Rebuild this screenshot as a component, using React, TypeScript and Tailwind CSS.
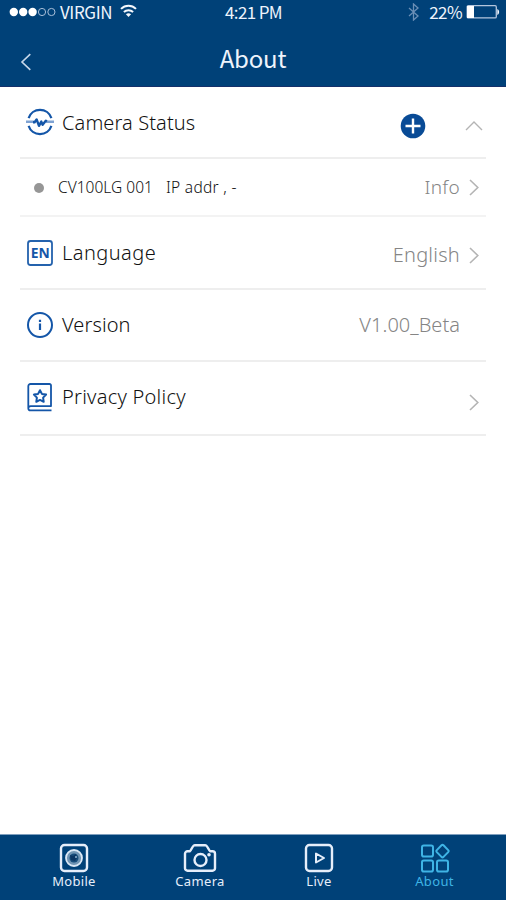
import React, { ReactNode, useState } from 'react';

type IconProps = { className?: string };

const WifiIcon = () => (
  <svg className="-mt-[2px]" width="17" height="14" viewBox="0 0 17 14" fill="none" stroke="#f4f7fc" strokeWidth="2">
    <path d="M1 4.9C5.2.7 11.8.7 16 4.9" />
    <path d="M3.9 8c2.6-2.5 6.6-2.5 9.2 0" />
    <path d="M8.5 13 5.9 10.3c1.5-1.4 3.7-1.4 5.2 0L8.5 13Z" fill="#f4f7fc" stroke="none" />
  </svg>
);

const BluetoothIcon = () => (
  <svg width="11" height="18" viewBox="0 0 11 18" fill="none" stroke="#6b8fb6" strokeWidth="1.3">
    <path d="m1 5 9 8-4.5 4V1L10 5l-9 8" />
  </svg>
);

const BatteryIcon = () => (
  <svg width="34" height="14" viewBox="0 0 34 14">
    <rect x="1.2" y="0.7" width="29.1" height="12.2" rx="1.2" fill="none" stroke="#b4c6dd" strokeWidth="1.3" />
    <rect x="1" y="1" width="7" height="12" fill="#fff" />
    <path d="M31.3 4v6c1-.4 1.8-1.5 1.8-3s-.8-2.6-1.8-3Z" fill="#f4f7fc" />
  </svg>
);

const ChevronRight = ({ className = '' }: IconProps) => (
  <svg className={className} width="11" height="17" viewBox="0 0 11 17" fill="none" stroke="#b4b4b4" strokeWidth="1.6">
    <path d="m1 1 7.8 7.5L1 16" />
  </svg>
);

const StatusIcon = () => (
  <svg width="28" height="28" viewBox="0 0 28 28" fill="none" stroke="#1456a8" strokeWidth="2.2">
    <path d="M2.6 10.2a12 12 0 0 1 22.8 0M2.6 17.8a12 12 0 0 0 22.8 0" />
    <path d="M0 13.8h8M20 13.8H28" stroke="#7fa3d3" strokeWidth="2.6" />
    <path d="M7 14.2h1.6l2-2.8 2.4 6.4 2.3-4.2 1.3 3.2 3.2-4 1 .8" strokeWidth="2.4" strokeLinejoin="round" />
  </svg>
);

const LanguageIcon = () => (
  <svg width="28" height="28" viewBox="0 0 28 28" fill="none">
    <rect x="2" y="2" width="24" height="24" rx="2.5" stroke="#2462ad" strokeWidth="1.8" />
    <text
      x="4.8"
      y="19"
      fontSize="14.5"
      fontWeight="700"
      textLength="19"
      lengthAdjust="spacingAndGlyphs"
      className="font-['Noto_Sans',sans-serif]"
      fill="#1456a8"
    >
      EN
    </text>
  </svg>
);

const VersionIcon = () => (
  <svg width="28" height="28" viewBox="0 0 28 28" fill="none" stroke="#1456a8" strokeWidth="2">
    <circle cx="14" cy="14" r="12" />
    <path d="M14 12.5V19M14 8.8V11" strokeWidth="2.2" />
  </svg>
);

const PrivacyIcon = () => (
  <svg className="-mt-[2px]" width="28" height="30" viewBox="0 0 28 30" fill="none" stroke="#1456a8" strokeWidth="1.8">
    <path d="M25 24.5v-21A1.500 1.500 0 0 0 23.500 2h-19A2.200 2.200 0 0 0 2.300 4.200v22a2.200 2.200 0 0 0 2.200 2.200h21M3 25.200a2 2 0 0 1 1.800-1h20.700" />
    <path d="m14 8.200 1.900 3.700 4.200.7-3 3 .6 4.200-3.700-1.900-3.700 1.900.6-4.200-3-3 4.200-.7Z" strokeWidth="2" strokeLinejoin="round" />
  </svg>
);

const MobileIcon = () => (
  <svg width="30" height="30" viewBox="0 0 30 30" fill="none">
    <rect x="2" y="2" width="26" height="26" rx="3.5" stroke="#e6eefa" strokeWidth="2.4" />
    <circle cx="15" cy="15" r="8" fill="#7195b4" stroke="#dce8f5" strokeWidth="1.8" />
    <circle cx="15" cy="15" r="4.5" fill="#184d7b" />
    <path d="m11 12 3 1 3-2 1 4-2 3-4-1Z" fill="#0b3563" />
    <circle cx="17" cy="14" r="1" fill="#8fb3d1" />
  </svg>
);

const CameraIcon = () => (
  <svg width="34" height="30" viewBox="0 0 34 30" fill="none" stroke="#e6eefa" strokeWidth="2.4" strokeLinejoin="round">
    <path d="M4.500 8.300h2.300c1.400-.5 2-4.200 3.900-5.700a2 2 0 0 1 1.200-.4h10.200a2 2 0 0 1 1.200.4c1.900 1.500 2.500 5.200 3.900 5.700h2.300a2.500 2.500 0 0 1 2.500 2.500v14.400a2.500 2.500 0 0 1-2.500 2.500h-25A2.500 2.500 0 0 1 2 25.200V10.800a2.500 2.500 0 0 1 2.500-2.500Z" />
    <circle cx="17.500" cy="17" r="6" />
    <circle cx="26" cy="11.800" r="1.800" fill="#e6eefa" stroke="none" />
  </svg>
);

const LiveIcon = () => (
  <svg width="30" height="30" viewBox="0 0 30 30" fill="none" stroke="#e6eefa" strokeLinejoin="round">
    <rect x="2" y="2" width="26" height="26" rx="3.5" strokeWidth="2.4" />
    <path d="M12 10.5v9l8-4.5Z" strokeWidth="2" />
  </svg>
);

const AboutIcon = () => (
  <svg width="30" height="30" viewBox="0 0 30 30" fill="none" stroke="#3fb4e5" strokeWidth="2" strokeLinejoin="round">
    <rect x="2" y="2.5" width="11" height="11" rx="1.8" />
    <path d="M21.500 2.300a1.500 1.500 0 0 1 2 0l4.700 4.800a1.500 1.500 0 0 1 0 2l-4.700 4.800a1.500 1.500 0 0 1-2 0l-4.700-4.800a1.500 1.500 0 0 1 0-2Z" />
    <rect x="2" y="17.500" width="11" height="11" rx="1.8" />
    <rect x="17" y="17.500" width="11" height="11" rx="1.8" />
  </svg>
);

interface RowProps {
  icon: ReactNode;
  label: string;
  labelClass: string;
  className: string;
  children?: ReactNode;
}

const Row = ({ icon, label, labelClass, className, children }: RowProps) => (
  <div className={`flex items-center border-b-2 border-[#eeeeee] pl-[6px] ${className}`}>
    {icon}
    <span className={`ml-[8px] whitespace-nowrap text-[20px] leading-[28px] text-[#111111] ${labelClass}`}>{label}</span>
    <div className="ml-auto flex items-center">{children}</div>
  </div>
);

const tabs = [
  { name: 'Mobile', icon: MobileIcon, item: 'w-[148px]', label: 'tracking-[0.3px]' },
  { name: 'Camera', icon: CameraIcon, item: 'w-[104px]', label: 'tracking-[0.35px]' },
  { name: 'Live', icon: LiveIcon, item: 'w-[134px]', label: 'tracking-[0.35px]' },
  { name: 'About', icon: AboutIcon, item: 'w-[97px]', label: 'tracking-[0.35px]' },
];

function App() {
  const [open, setOpen] = useState(true);

  return (
    <div className="flex h-[900px] w-[506px] flex-col overflow-hidden bg-white font-['Noto_Sans',sans-serif]">
      <header className="h-[87px] shrink-0 border-b border-[#15306a] bg-[#004178] font-['Noto_Sans_CJK_SC',sans-serif] text-[#eef4fc]">
        <div className="grid h-[23px] grid-cols-3 items-center pl-[9px] pr-[6px] text-[17px] leading-[23px]">
          <div className="flex items-center">
            <svg width="47" height="10" viewBox="0 0 47 10" fill="#fff">
              <circle cx="4.8" cy="5" r="4.2" />
              <circle cx="14.2" cy="5" r="4.2" />
              <circle cx="23.6" cy="5" r="4.2" />
              <circle cx="33" cy="5" r="3.6" fill="none" stroke="#a9bfd9" />
              <circle cx="42.4" cy="5" r="3.6" fill="none" stroke="#a9bfd9" />
            </svg>
            <span className="-mt-px ml-[4px] mr-[8px] tracking-[-0.4px]">VIRGIN</span>
            <WifiIcon />
          </div>
          <div className="-ml-[2px] -mt-px text-center tracking-[-0.65px]">4:21 PM</div>
          <div className="flex items-center justify-end">
            <BluetoothIcon />
            <span className="-mt-px ml-[10px] mr-[4px] tracking-[-0.6px]">22%</span>
            <BatteryIcon />
          </div>
        </div>
        <div className="grid h-[62px] grid-cols-3 items-center">
          <svg className="ml-[20px] mt-[15px]" width="12" height="18" viewBox="0 0 12 18" fill="none" stroke="#c7d8ea" strokeWidth="1.6">
            <path d="M10.3 1.2 2 9l8.3 7.800" />
          </svg>
          <h1 className="mt-[7px] text-center text-[24px] leading-[36px] tracking-[-0.2px]">About</h1>
        </div>
      </header>

      <main className="flex-1 px-[20px] font-light">
        <Row icon={<StatusIcon />} label="Camera Status" labelClass="mt-[2px] tracking-[0.1px]" className="h-[72px]">
          <svg className="mr-[39px] mt-[7px]" width="26" height="26" viewBox="0 0 26 26">
            <circle cx="13" cy="13" r="12.3" fill="#094b96" />
            <path d="M13 5.500v15M5.500 13h15" stroke="#fff" strokeWidth="2.4" />
          </svg>
          <button className="mr-[3px] mt-[7px]" onClick={() => setOpen(!open)}>
            <svg width="18" height="11" viewBox="0 0 18 11" fill="none" stroke="#b4b4b4" strokeWidth="1.4">
              <path d="m1 10 8-8 8 8" />
            </svg>
          </button>
        </Row>

        {open && (
          <div className="flex h-[58px] items-center border-b-2 border-[#f3f3f3] pl-[14px] pr-[6px]">
            <span className="mt-[2px] h-[10px] w-[10px] rounded-full bg-[#969696]" />
            <span className="ml-[14px] whitespace-pre text-[15.5px] leading-[22px] tracking-[0.02px] text-[#111111]">CV100LG 001</span>
            <span className="ml-[13px] whitespace-pre text-[15.5px] leading-[22px] tracking-[0.3px] text-[#111111]">IP addr , -</span>
            <span className="-mt-px ml-auto mr-[9px] text-[19px] leading-[26px] tracking-[0.3px] text-[#858585]">Info</span>
            <ChevronRight />
          </div>
        )}

        <Row icon={<LanguageIcon />} label="Language" labelClass="tracking-[0.45px]" className="h-[73px] pr-[6px]">
          <span className="mr-[9px] mt-[4px] text-[20px] leading-[26px] tracking-[0.25px] text-[#858585]">English</span>
          <ChevronRight className="mt-[5px]" />
        </Row>
        <Row icon={<VersionIcon />} label="Version" labelClass="tracking-[0.1px]" className="h-[72px]">
          <span className="mr-[26px] text-[20px] leading-[26px] tracking-[0.03px] text-[#858585]">V1.00_Beta</span>
        </Row>
        <Row icon={<PrivacyIcon />} label="Privacy Policy" labelClass="-mt-[2px] tracking-[0.25px]" className="h-[74px] pr-[6px]">
          <ChevronRight className="mt-[8px]" />
        </Row>
      </main>

      <nav className="flex h-[66px] shrink-0 border-t border-[#7f9fbe] bg-[#004178] pt-[8px]">
        {tabs.map((tab) => {
          const Icon = tab.icon;
          return (
            <div
              key={tab.name}
              className={`flex flex-col items-center ${tab.item} ${tab.name === 'About' ? 'text-[#3fb4e5]' : 'text-[#e6eefa]'}`}
            >
              <Icon />
              <span className={`text-[13px] leading-[16px] ${tab.label}`}>{tab.name}</span>
            </div>
          );
        })}
      </nav>
    </div>
  );
}

export default App;
